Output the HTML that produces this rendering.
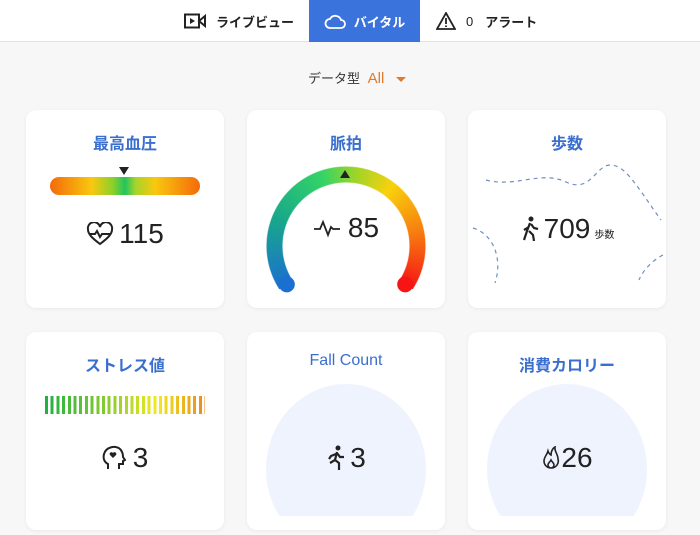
<!DOCTYPE html><html><head><meta charset="utf-8"><style>
*{margin:0;padding:0;box-sizing:border-box}
body{width:700px;height:535px;background:#f7f7f7;font-family:"Liberation Sans","Noto Sans CJK JP",sans-serif;position:relative;overflow:hidden;color:#222}
.top{position:absolute;left:0;top:0;width:700px;height:42px;background:#fff;border-bottom:1px solid #e2e2e2}
.tab{position:absolute;top:0;height:42px;display:flex;align-items:center;font-size:13px;font-weight:bold;color:#222}
.act{background:#3b73dc;color:#fff;left:309px;width:111px;justify-content:center}
.card{position:absolute;width:198px;height:198px;background:#fff;border-radius:10px;box-shadow:0 1px 4px rgba(0,0,0,.06);overflow:hidden}
.t{position:absolute;top:20px;width:100%;text-align:center;color:#3b6fcf;font-size:16px;font-weight:bold}
.v{position:absolute;width:100%;text-align:center;font-size:28px;display:flex;justify-content:center;align-items:center;gap:7px}
</style></head><body>
<div class="top">
<div class="tab" style="left:184px"><svg width="22" height="16" viewBox="0 0 22 16"><rect x="1" y="1.5" width="14" height="13" fill="none" stroke="#222" stroke-width="2"/><path d="M6 5v6l5-3z" fill="#222"/><path d="M15 8l6-5v10z" fill="none" stroke="#222" stroke-width="2"/></svg><span style="margin-left:10px">ライブビュー</span></div>
<div class="tab act"><svg width="22" height="16" viewBox="0 0 22 16"><path d="M6 15h11a4 4 0 0 0 0-8 6 6 0 0 0-11-1 4.5 4.5 0 0 0 0 9z" fill="none" stroke="#fff" stroke-width="1.8"/></svg><span style="margin-left:8px">バイタル</span></div>
<div class="tab" style="left:436px;font-weight:normal"><svg width="20" height="18" viewBox="0 0 20 18"><path d="M10 1L19 17H1z" fill="none" stroke="#222" stroke-width="1.8"/><path d="M10 6v6M10 13.5v1.5" stroke="#222" stroke-width="1.8"/></svg><span style="margin-left:10px">0</span><span style="margin-left:12px;font-weight:bold">アラート</span></div>
</div>
<div style="position:absolute;top:68px;left:308px;font-size:13px;color:#333">データ型 <span style="color:#e07a2c;font-size:15px;margin-left:4px">All</span><span style="display:inline-block;margin-left:12px;border-left:5px solid transparent;border-right:5px solid transparent;border-top:5px solid #e07a2c;vertical-align:middle"></span></div>

<div class="card" style="left:26px;top:110px"><div class="t">最高血圧</div>
<div style="position:absolute;left:24px;top:67px;width:150px;height:18px;border-radius:9px;background:linear-gradient(90deg,#f46a0a,#f9c80e 28%,#8bd02a 42%,#22c55e 50%,#a6d42a 57%,#f9c80e 70%,#f46a0a)"></div>
<div style="position:absolute;left:93px;top:57px;border-left:5px solid transparent;border-right:5px solid transparent;border-top:8px solid #222"></div>
<div class="v" style="top:108px;gap:5px"><svg width="28" height="24" viewBox="0 0 28 24"><path d="M14 22C6 16 2 12 2 7.5A5.5 5.5 0 0 1 14 5a5.5 5.5 0 0 1 12 2.5C26 12 22 16 14 22z" fill="none" stroke="#222" stroke-width="2"/><path d="M3 12h6l2-3 3 6 2-3h9" fill="none" stroke="#222" stroke-width="2"/></svg><span>115</span></div></div>

<div class="card" style="left:247px;top:110px"><div class="t">脈拍</div>
<div style="position:absolute;left:19px;top:56px;width:160px;height:160px;border-radius:50%;background:conic-gradient(from 237deg,#1a6fd0 0deg,#19a88a 55deg,#35d466 105deg,#9cd42a 130deg,#f8d20c 160deg,#f7810f 200deg,#f51515 246deg,transparent 246deg);-webkit-mask:radial-gradient(circle,transparent 63px,#000 64px,#000 79px,transparent 80px);mask:radial-gradient(circle,transparent 63px,#000 64px,#000 79px,transparent 80px)"></div>
<svg style="position:absolute;left:0;top:0" width="198" height="198">
<circle cx="39.8" cy="174.4" r="8" fill="#1a6fd0"/><circle cx="158.2" cy="174.4" r="8" fill="#f51515"/>
<path d="M93 68l5-8 5 8z" fill="#222"/></svg>
<div class="v" style="top:102px"><svg width="28" height="20" viewBox="0 0 28 20"><path d="M1 11h6l3-7 5 13 3-8 2 2h7" fill="none" stroke="#222" stroke-width="1.8"/></svg><span>85</span></div></div>

<div class="card" style="left:468px;top:110px"><div class="t">歩数</div>
<svg style="position:absolute;left:0;top:0" width="198" height="198" fill="none" stroke="#6f8fbf" stroke-width="1.2" stroke-dasharray="4 4"><path d="M18 70c30 8 55-10 80 2s30-18 45-17 25 20 50 55"/><path d="M5 118c20 6 30 30 22 55"/><path d="M195 145c-10 5-20 15-24 25"/></svg>
<div class="v" style="top:103px;gap:4px"><svg width="20" height="26" viewBox="0 0 20 26"><circle cx="11" cy="3" r="2.5" fill="#222"/><path d="M10 7l-3 8-3 9M9 11l-5 3M11 8l3 4 4 1M9 15l4 4 1 6" fill="none" stroke="#222" stroke-width="2.2"/></svg><span>709</span><span style="font-size:10px;margin-top:8px">歩数</span></div></div>

<div class="card" style="left:26px;top:332px"><div class="t">ストレス値</div>
<div style="position:absolute;left:19px;top:64px;width:160px;height:18px;background:repeating-linear-gradient(90deg,transparent 0 3px,#fff 3px 5.7px),linear-gradient(90deg,#20b040,#8ccc30 40%,#f0ea20 70%,#e88a20)"></div>
<div class="v" style="top:110px"><svg width="24" height="26" viewBox="0 0 24 26"><path d="M6 24v-5C2 17 1 13 2 9 4 2 13 0 18 4c3 3 3 6 3 8l2 3-2 1v3h-4v5" fill="none" stroke="#222" stroke-width="2"/><path d="M11 13l-3-3a1.5 1.5 0 0 1 3-2 1.5 1.5 0 0 1 3 2z" fill="#222"/></svg><span>3</span></div></div>

<div class="card" style="left:247px;top:332px"><div class="t" style="font-weight:normal">Fall Count</div>
<div style="position:absolute;left:19px;top:52px;width:160px;height:170px;border-radius:50%;background:#eef3fd"></div>
<div style="position:absolute;left:0;top:184px;width:198px;height:14px;background:#fff"></div>
<div class="v" style="top:110px;gap:4px"><svg width="20" height="26" viewBox="0 0 20 26"><circle cx="12" cy="3" r="2.5" fill="#222"/><path d="M11 7l-2 8-5 3M10 9l-5 2-2 3M11 8l3 4 4 0M9 15l4 3v7" fill="none" stroke="#222" stroke-width="2.2"/></svg><span>3</span></div></div>

<div class="card" style="left:468px;top:332px"><div class="t">消費カロリー</div>
<div style="position:absolute;left:19px;top:52px;width:160px;height:170px;border-radius:50%;background:#eef3fd"></div>
<div style="position:absolute;left:0;top:184px;width:198px;height:14px;background:#fff"></div>
<div class="v" style="top:110px;gap:0"><svg width="20" height="24" viewBox="0 0 20 24"><path d="M10 22a7 7 0 0 1-7-7c0-4 3-6 4-10 1 3 3 4 3 4 0-4 2-7 4-8-1 4 3 7 3 12a7 7 0 0 1-7 9zM10 22a3 3 0 0 1-3-3c0-2 2-3 3-5 1 2 3 3 3 5a3 3 0 0 1-3 3" fill="none" stroke="#222" stroke-width="1.6"/></svg><span>26</span></div></div>
</body></html>
